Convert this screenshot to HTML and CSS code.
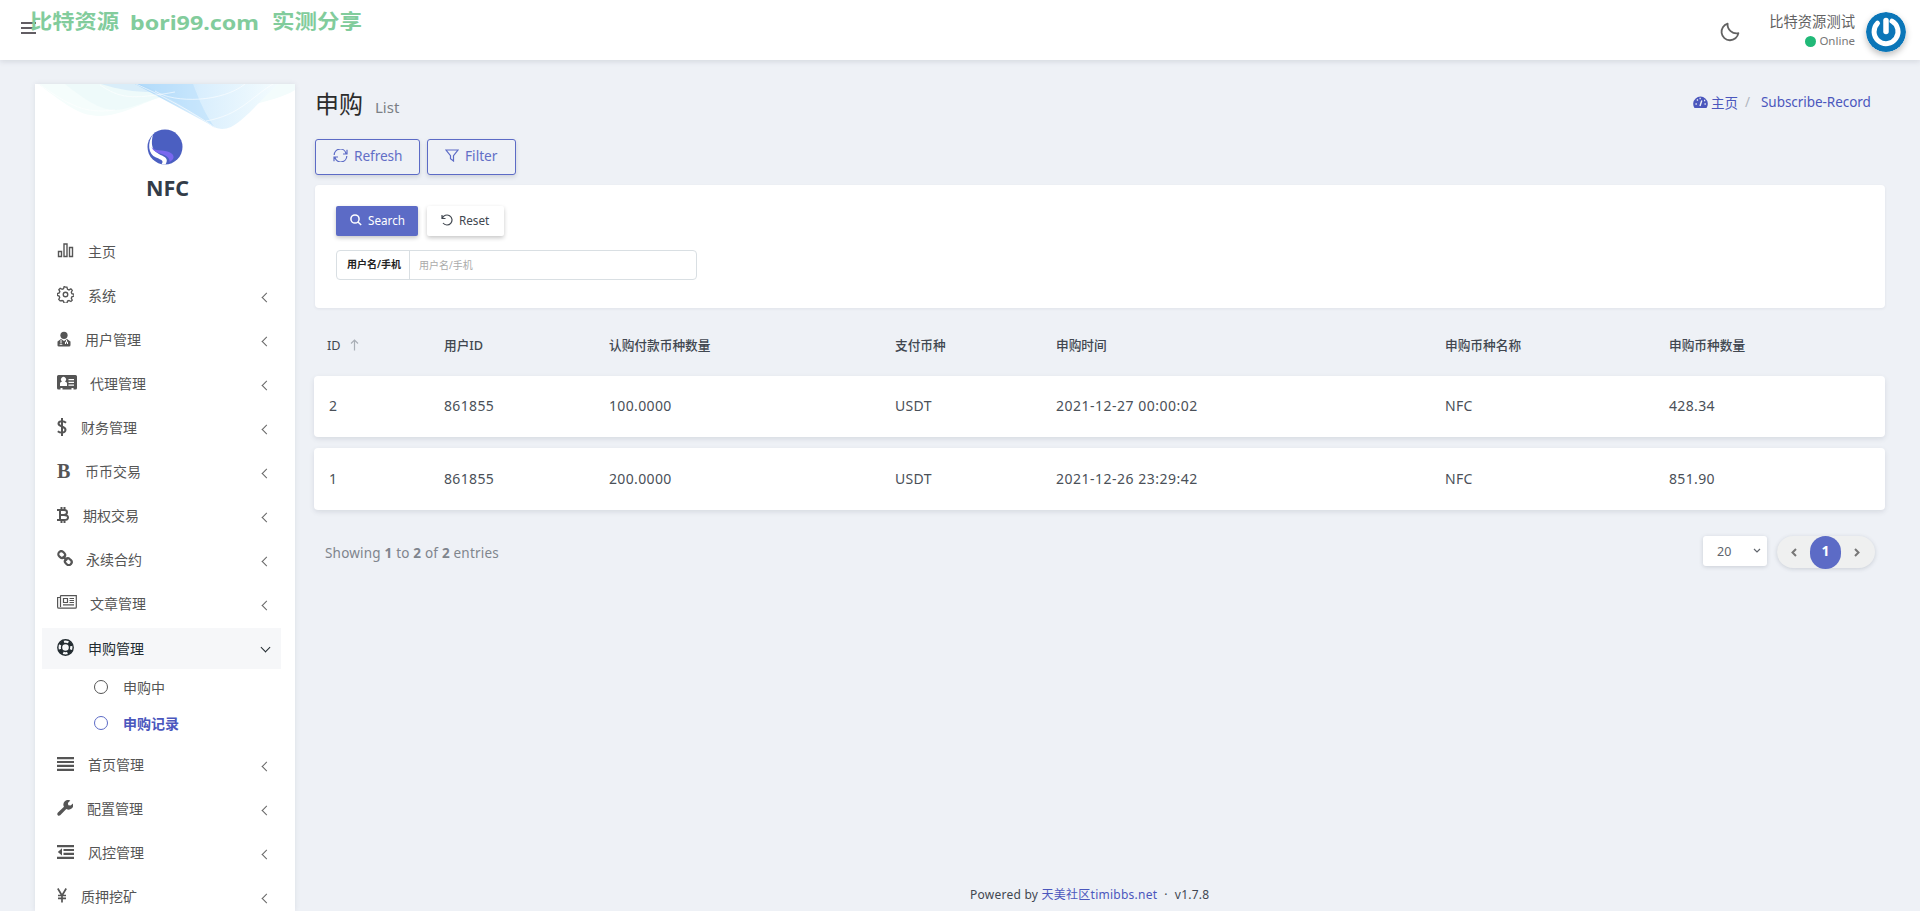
FILE: index.html
```html
<!DOCTYPE html>
<html lang="zh">
<head>
<meta charset="utf-8">
<title>申购</title>
<link rel="stylesheet" href="styles.css">
</head>
<body>
<header class="topbar">
  <svg class="burger" width="15" height="13" viewBox="0 0 15 13"><path d="M0 1h15M0 6h15M0 11h15" stroke="#625d63" stroke-width="2"/></svg>
  <div class="top-right">
    <svg class="moon" width="20" height="20" viewBox="0 0 20 20"><path d="M7.6 1.6a9 9 0 0 0 10.8 9.6A8.5 8.5 0 1 1 7.600 1.600z" fill="none" stroke="#626262" stroke-width="1.8" stroke-linejoin="round"/></svg>
    <div class="user"><div class="user-name">比特资源测试</div><div class="status"><i class="dot"></i>Online</div></div>
    <svg class="avatar" width="40" height="40" viewBox="0 0 40 40"><circle cx="20" cy="20" r="20" fill="#0b76b8"/><path d="M11.500 11.200a12 12 0 1 0 14.500-2" fill="none" stroke="#fff" stroke-width="5" stroke-linecap="round"/><path d="M20 8.500v11" stroke="#fff" stroke-width="5.500" stroke-linecap="round"/></svg>
  </div>
  <svg class="watermark" width="340" height="26" viewBox="0 0 340 26"><text x="1" y="19" textLength="89" lengthAdjust="spacingAndGlyphs">比特资源</text><text x="101" y="19.500" textLength="129" lengthAdjust="spacingAndGlyphs" class="wm-latin">bori99.com</text><text x="243" y="19" textLength="90" lengthAdjust="spacingAndGlyphs">实测分享</text></svg>
</header>
<div class="page">
<aside class="sidebar">
  <div class="brand">
    <svg class="wave" width="260" height="47" viewBox="0 0 260 47">
      <defs><linearGradient id="b" x1="0" y1="0" x2="1" y2="0"><stop offset="0" stop-color="#a8d5f8"/><stop offset=".45" stop-color="#d9eefd"/><stop offset="1" stop-color="#f4fcfe"/></linearGradient></defs>
      <path d="M3 0C35 24 46 32 66 32C96 30 112 14 145 8L260 0z" fill="#f5fdfc"/>
      <path d="M30 0C50 16 65 26 80 26C100 25 115 13 150 8L165 0z" fill="#eefafa"/>
      <path d="M66 0C88 7 110 10 140 7L160 0z" fill="#d9edf9"/>
      <path d="M205 26C225 17 244 16 260 6V0h-60z" fill="#f3fcfc"/>
      <path d="M100 0L174 40Q184 48 196 43C214 33 226 14 244 0z" fill="url(#b)"/>
      <path d="M158 0C165 18 170 30 180 44C153 27 132 9 104 0z" fill="#b8dffb" opacity=".55"/>
      <path d="M120 7C140 20 188 18 210 0M171 37C205 31 215 14 238 0M101 0C128 12 158 28 182 45M4 0C35 22 50 30 80 26M65 1C85 14 95 16 140 8" fill="none" stroke="#fff" opacity=".6"/>
    </svg>
    <svg class="logo" width="36" height="36" viewBox="0 0 36 36"><circle cx="18" cy="18" r="17.500" fill="#4b5fc1"/><path d="M6 5.200C0 14 1 25 9 28.500C15 31 17 32 14.500 35.200L18.500 35.500C21 31 20 29 15 26.500C8 23 2.500 20 6 5.200z" fill="#fff"/><path d="M4.500 18C8 23 15 20 22 23C29 26 27 31 22.500 33C23 28 18 26 13 24.500C8 23 5.500 21 4.500 18z" fill="#7967ee"/></svg>
    <div class="brand-name">NFC</div>
  </div>
  <nav class="menu">
    <a class="item"><svg class="ic" width="17" height="17" viewBox="0 0 17 17"><path class="ln" d="M1.500 9.500h3v5h-3zM7 2h3v12.500H7zM12.500 5.500h3v9h-3z"/></svg>主页</a>
    <a class="item"><svg class="ic" width="17" height="17" viewBox="0 0 24 24"><path class="ln gear" d="M12 1.500l2 .2.900 3 2 .8 2.700-1.400 1.900 2-1.300 2.700.8 2 3 .9v2.600l-3 .9-.8 2 1.300 2.700-1.900 2-2.700-1.400-2 .8-.9 3h-4l-.9-3-2-.8L4.400 21l-1.900-2 1.300-2.700-.8-2-2.500-.9v-2.600l2.700-.9.800-2-1.400-2.700 1.900-2 2.700 1.400 2-.8.900-3zM15.200 12a3.200 3.200 0 1 1-6.400 0 3.200 3.200 0 0 1 6.400 0z"/></svg>系统<b></b></a>
    <a class="item"><svg class="ic" width="14" height="16" viewBox="0 0 14 16"><circle cx="7" cy="4.300" r="3.600"/><path d="M4 8L0.500 10.500V14.500Q0.500 15.500 2 15.500H12q1.500 0 1.500-1.500V10.500L10 8 7 10z"/><path d="M4 9v3M9.500 9v2M8.500 13v-2h2v2M3 14a1 1 0 1 1 2 0" stroke="#fff" fill="none"/></svg>用户管理<b></b></a>
    <a class="item"><svg class="ic up" width="20" height="16" viewBox="0 0 20 16"><path d="M1.500 1h17q1.500 0 1.500 1.500V14q0 1.500-1.500 1.500h-2V14h-2v1.500h-9V14h-2v1.500h-2Q0 15.500 0 14V2.500Q0 1 1.500 1z"/><path d="M3 12V9.500q0-1.500 2-2A2.500 2.500 0 1 1 8 7.500q2 .5 2 2V12zM11.500 5H17v1.300h-5.500zM11.500 7.700H17V9h-5.500zM11.500 10.500H17v1.300h-5.500z" fill="#fff"/></svg>代理管理<b></b></a>
    <a class="item"><svg class="ic" width="10" height="18" viewBox="0 0 10 18"><path d="M5 0v18M9 4.800C7 3 2 2.500 1.500 5.500C1.400 9 9 8 8.500 12C8 15.500 3 15 .8 13.200" fill="none" stroke="#555" stroke-width="2"/></svg>财务管理<b></b></a>
    <a class="item"><span class="ic letter">B</span>币币交易<b></b></a>
    <a class="item"><svg class="ic" width="12" height="16" viewBox="0 0 12 16"><path d="M0 3h3M0 13h3M3 3v10M3 3h4q3 0 3 2.300T7 8H3M7 8q4 0 4 2.500T7 13H3M4.500 0v3M7.500 0v3M4.500 13v3M7.500 13v3" fill="none" stroke="#555" stroke-width="2"/></svg>期权交易<b></b></a>
    <a class="item"><svg class="ic up" width="16" height="16" viewBox="0 0 16 16"><g fill="none" stroke="#555" stroke-width="2.200"><rect x="1.200" y="1.700" width="7" height="5.800" rx="2.800" transform="rotate(45 4.700 4.600)"/><rect x="7.800" y="8.800" width="7" height="5.800" rx="2.800" transform="rotate(45 11.300 11.700)"/><path d="M5.800 6.200l4.400 4.200"/></g></svg>永续合约<b></b></a>
    <a class="item"><svg class="ic up" width="20" height="14" viewBox="0 0 20 14"><path class="ln thin" d="M3.500.600h15.800v11.600q0 1-1 1H2q-1.400 0-1.400-1.300V2.500h2.900M3.500.600V12M6.500 3.500h4v4h-4zM12.500 3.500H17M12.500 5.500H17M12.500 7.500H17M6 9.800h11"/></svg>文章管理<b></b></a>
    <a class="item open"><svg class="ic" width="17" height="17" viewBox="0 0 17 17"><circle cx="8.500" cy="8.500" r="7.700" class="ring"/><circle cx="8.500" cy="8.500" r="4" class="ring"/><circle cx="8.500" cy="8.500" r="5.800" fill="none" stroke="#222b30" stroke-width="3.500" stroke-dasharray="4.600 4.510" stroke-dashoffset="-2.250"/></svg>申购管理<b></b></a>
    <a class="sub"><i></i>申购中</a>
    <a class="sub active"><i></i>申购记录</a>
    <a class="item first-after"><svg class="ic" width="17" height="14" viewBox="0 0 17 14"><path d="M0 0h17v2.200H0zM0 3.900h17v2.200H0zM0 7.800h17V10H0zM0 11.700h17v2.200H0z"/></svg>首页管理<b></b></a>
    <a class="item"><svg class="ic" width="16" height="16" viewBox="0 0 16 16"><path d="M.700 12.700L7 6.800A4.600 4.600 0 0 1 13.300.600L10.900 3l.4 2.200 2.300.3L16 3.500A4.600 4.600 0 0 1 9.300 9L3.200 15.300Q1.800 16.200.800 15.200T.700 12.700z"/></svg>配置管理<b></b></a>
    <a class="item"><svg class="ic" width="17" height="14" viewBox="0 0 17 14"><path d="M0 0h17v2.200H0zM6.500 3.900H17v2.200H6.500zM6.500 7.800H17V10H6.500zM0 11.700h17v2.200H0zM5 3.300v7.200L.8 7z"/></svg>风控管理<b></b></a>
    <a class="item"><svg class="ic" width="10" height="15" viewBox="0 0 10 15"><path d="M.800.500L5 7.500 9.200.500M1 7.500h8M1 10.300h8M5 7v7.500" fill="none" stroke="#555" stroke-width="1.700"/></svg>质押挖矿<b></b></a>
  </nav>
</aside>
<main class="content">
  <div class="heading">
    <h1>申购<small>List</small></h1>
    <div class="crumbs"><svg width="15" height="12" viewBox="0 0 15 12"><path d="M1.500 12A7.300 7.300 0 1 1 13.500 12z" fill="#4b57bd"/><path d="M7 10L8.800 4.500M2.500 8h1.300M3.800 4h1.300M6.500 2.500h1.300M11 4.500h1.200M11.500 8h1.300" stroke="#eef1f6" stroke-width="1.400"/></svg><a>主页</a><span>/</span><em>Subscribe-Record</em></div>
  </div>
  <div class="tools">
    <button class="outline refresh"><svg width="15" height="13" viewBox="0 0 15 13"><path d="M1.200 6A6 6 0 0 1 13 4.500M14 .800V5h-4M13.800 7A6 6 0 0 1 2 8.500M1 12.200V8h4"/></svg>Refresh</button>
    <button class="outline filter"><svg width="14" height="13" viewBox="0 0 14 13"><path d="M1 1h12L8.500 6.700V12l-3-2.200V6.700z"/></svg>Filter</button>
  </div>
  <section class="card">
    <div class="actions">
      <button class="search"><svg width="12" height="12" viewBox="0 0 12 12"><circle cx="5" cy="5" r="4.100"/><path d="M8 8l3.200 3"/></svg>Search</button>
      <button class="reset"><svg width="12" height="12" viewBox="0 0 12 12"><path d="M1 1v3.500h3.500M1.300 4.300A5 5 0 1 1 2 9"/></svg>Reset</button>
    </div>
    <div class="field"><label>用户名/手机</label><input placeholder="用户名/手机"></div>
  </section>
  <div class="grid">
    <div class="row head"><span>ID<svg width="9" height="12" viewBox="0 0 9 12"><path d="M4.500 11.500V1M1 4.500L4.500 1 8 4.500" fill="none" stroke="#a9afb6" stroke-width="1.200"/></svg></span><span>用户ID</span><span>认购付款币种数量</span><span>支付币种</span><span>申购时间</span><span>申购币种名称</span><span>申购币种数量</span></div>
    <div class="row"><span>2</span><span>861855</span><span>100.0000</span><span>USDT</span><span class="date">2021-12-27 00:00:02</span><span>NFC</span><span>428.34</span></div>
    <div class="row last"><span>1</span><span>861855</span><span>200.0000</span><span>USDT</span><span class="date">2021-12-26 23:29:42</span><span>NFC</span><span>851.90</span></div>
  </div>
  <div class="foot">
    <div class="showing">Showing <strong>1</strong> to <strong>2</strong> of <strong>2</strong> entries</div>
    <div class="per">20<svg width="8" height="6" viewBox="0 0 8 6"><path d="M1 1l3 3 3-3"/></svg></div>
    <div class="pager"><svg width="6" height="9" viewBox="0 0 6 9"><path d="M5 1L1.500 4.500 5 8"/></svg><strong>1</strong><svg width="6" height="9" viewBox="0 0 6 9"><path d="M1 1l3.500 3.500L1 8"/></svg></div>
  </div>
  <footer>Powered by <a>天美社区timibbs.net</a><span>·</span>v1.7.8</footer>
</main>
</div>
</body>
</html>
```
FILE: styles.css
```css
*{box-sizing:border-box}
body{margin:0;height:911px;overflow:hidden;background:#eef1f6;font-family:"Noto Sans","Noto Sans CJK SC",sans-serif;font-size:14px;color:#414750}
svg{display:block;flex:none}
button,input{font-family:inherit;margin:0}
.topbar{position:relative;height:60px;background:#fff;box-shadow:0 2px 5px rgba(60,70,90,.13);display:flex;justify-content:space-between;padding:0 14px 0 21px}
.burger{margin-top:22px}
.watermark{position:absolute;left:29px;top:10px;overflow:visible}
.watermark text{font:bold 20px "Noto Sans CJK SC",sans-serif;fill:#82cc9c}
.watermark .wm-latin{font:bold 20px "Noto Sans",sans-serif}
.top-right{display:flex}
.moon{margin:22px 29px 0 0}
.user{width:86px;margin-right:11px;text-align:right;color:#626262;padding-top:12px}
.user-name{font-size:14.300px;line-height:20px;white-space:nowrap}
.status{display:flex;align-items:center;justify-content:flex-end;font-size:11.500px;line-height:18px;color:#777}
.dot{width:11px;height:11px;border-radius:50%;background:#21b978;margin-right:3px}
.avatar{margin-top:12px;border-radius:50%;box-shadow:0 3px 6px rgba(0,0,0,.25)}
.page{display:flex;height:851px}
.sidebar{width:260px;height:827px;margin:24px 20px 0 35px;background:#fff;box-shadow:0 0 5px rgba(60,70,90,.1);overflow:hidden;flex:none}
.brand{height:145px;display:flex;flex-direction:column;align-items:center}
.wave{height:47px}
.logo{margin:-2px 1px 0 0}
.brand-name{font-weight:bold;font-size:21.500px;line-height:28px;margin-top:9px;margin-left:5px;color:#333c48}
.menu{padding:3px 14px 0 7px}
.item{display:flex;align-items:center;height:40px;margin-bottom:4px;padding:0 13px 2px 15px;color:#555;font-size:14px;white-space:nowrap}
.ic{margin:-1px 14px 0 0;fill:#555}
.ic.up{margin-top:-3px;margin-right:13px}
.letter{width:14px;font:bold 20px/20px "Liberation Serif",serif;color:#555}
.ln{fill:none;stroke:#555;stroke-width:1.400}
.gear{stroke-width:1.900}
.thin{stroke-width:1.200}
.item b{width:7px;height:7px;border-left:1.400px solid #666;border-bottom:1.400px solid #666;transform:rotate(45deg);margin:4px -2px 0 auto}
.item.open{height:41px;margin-top:1px;background:#f6f7f9;color:#222b30}
.item.open b{transform:rotate(-45deg);border-color:#222b30;margin:0 -1px 0 auto}
.ring{fill:none;stroke:#222b30;stroke-width:1.400}
.sub{display:flex;align-items:center;height:36px;padding-left:52px;color:#555}
.open + .sub{margin-top:-4px}
.sub i{width:14px;height:14px;border:1.400px solid #555;border-radius:50%;margin-right:15px}
.sub.active{color:#4b57bd;font-weight:bold}
.sub.active i{border-color:#5c6bc6}
.first-after{margin-top:4px}
.content{width:1570px;display:flex;flex-direction:column}
.heading{height:79px;display:flex;justify-content:space-between;padding-top:24px}
h1{margin:0;font-weight:400;font-size:24px;line-height:40px;color:#2c2c2c}
h1 small{font-size:15px;color:#7b7f85;margin-left:12px}
.crumbs{display:flex;align-items:center;height:36px;padding-right:13px;color:#4b57bd;font-size:13.500px}
.crumbs a{margin-left:3px}
.crumbs span{color:#b0b5bd;margin:0 11px 0 7px}
.crumbs em{font-style:normal;width:111px;white-space:nowrap;letter-spacing:-.05px}
.tools{display:flex;gap:7px}
.outline{height:36px;border:1px solid #5c6bc6;border-radius:3px;background:#eef1f6;color:#626fc6;display:flex;align-items:center;font-size:13.700px;padding:0 0 4px 17px;box-shadow:0 2px 4px rgba(60,70,90,.18)}
.outline svg,.reset svg,.search svg{fill:none;stroke:#5c6bc6;stroke-width:1.200;margin-right:6px}
.refresh{width:105px;letter-spacing:-.1px}
.filter{width:89px}
.card{height:123px;margin-top:10px;padding:21px;background:#fff;border-radius:4px;box-shadow:0 1px 3px rgba(60,70,90,.08)}
.actions{display:flex;gap:9px}
.actions button{height:30px;border:0;font-size:11.700px;display:flex;align-items:center;padding:0 0 3px 14px;border-radius:2px;box-shadow:0 2px 4px rgba(0,0,0,.22)}
.actions .search{width:82px;background:#5c6bc6;color:#fff}
.search svg{stroke:#fff;stroke-width:1.500}
.actions .reset{width:77px;background:#fff;color:#414750;padding-left:14px}
.reset svg{stroke:#414750}
.field{width:361px;height:30px;margin-top:14px;display:flex;border:1px solid #d9dfe3;border-radius:4px;overflow:hidden}
.field label{width:73px;border-right:1px solid #d9dfe3;font-size:10px;font-weight:600;line-height:27px;padding-left:10px;color:#222;white-space:nowrap}
.field input{border:0;font-size:10px;padding:0 9px;width:280px;outline:0}
.field input::placeholder{color:#aaa}
.grid{margin-left:-1px;padding-top:30px;width:1571px}
.row{display:grid;grid-template-columns:115px 165px 286px 161px 389px 224px 1fr;align-items:center;height:61px;padding:0 0 2px 15px;background:#fff;border-radius:4px;box-shadow:0 2px 5px rgba(60,70,90,.13);font-size:14px;color:#4a5058;margin-bottom:11px;letter-spacing:.35px}
.date{letter-spacing:.5px}
.row.last{height:62px}
.row.head{height:16px;padding-bottom:0;margin:-3px 0 25px;background:none;box-shadow:none;font-size:12.700px;font-weight:500;letter-spacing:0;color:#414750}
.head span{display:flex;align-items:center}
.head span:first-child{margin-left:-2px;gap:9px;font-weight:400}
.foot{display:flex;height:32px;margin-top:15px;padding:0 10px 0 10px}
.showing{color:#7f858d;font-size:13.500px;letter-spacing:.2px;line-height:34px;margin-right:auto}
.per{width:64px;height:30px;background:#fff;border-radius:3px;box-shadow:0 1px 4px rgba(60,70,90,.2);display:flex;align-items:center;justify-content:space-between;padding:0 6px 0 14px;font-size:12.500px;color:#60656c}
.per svg,.pager svg{fill:none;stroke:#60656c;stroke-width:1.200}
.pager{width:98px;height:32px;margin-left:10px;border-radius:16px;background:#eff0f0;box-shadow:0 1px 4px rgba(60,70,90,.2);display:flex;align-items:center;justify-content:space-between;padding:0 15px 0 14px}
.pager svg{stroke:#777;stroke-width:2}
.pager strong{width:31px;height:33px;border-radius:16px;background:#5c6bc6;color:#fff;text-align:center;line-height:30px;font-size:14px}
footer{margin:auto auto 6px;font-size:12px;line-height:20px;width:260px;white-space:nowrap;letter-spacing:.25px}
footer a{color:#4b57bd}
footer span{margin:0 7px}
```
